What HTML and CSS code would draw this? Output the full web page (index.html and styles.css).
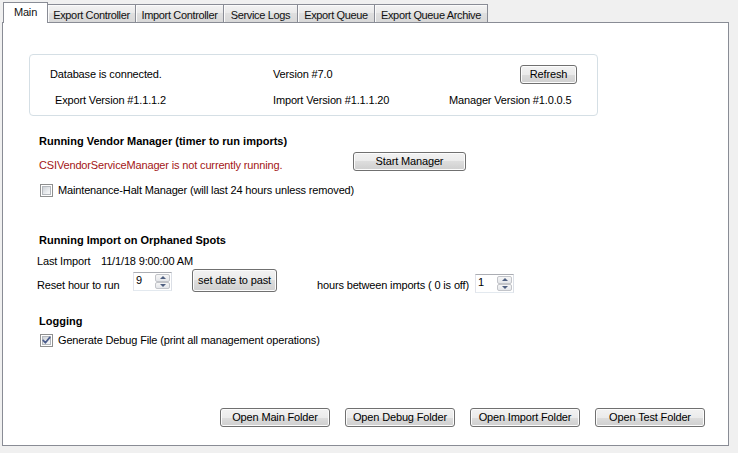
FILE: index.html
```html
<!DOCTYPE html>
<html>
<head>
<meta charset="utf-8">
<title>Vendor Manager</title>
<link rel="stylesheet" href="styles.css">
</head>
<body>
<div class="tabs">
  <div class="tab tab-active">Main</div>
  <div class="tab">Export Controller</div>
  <div class="tab">Import Controller</div>
  <div class="tab">Service Logs</div>
  <div class="tab">Export Queue</div>
  <div class="tab">Export Queue Archive</div>
</div>
<div class="panel">
  <div class="status-box">
    <span>Database is connected.</span>
    <span>Version #7.0</span>
    <span><button class="btn btn-refresh">Refresh</button></span>
    <span class="indent">Export Version #1.1.1.2</span>
    <span>Import Version #1.1.1.20</span>
    <span>Manager Version #1.0.0.5</span>
  </div>

  <section class="sec sec-vendor">
    <h2 class="heading">Running Vendor Manager (timer to run imports)</h2>
    <div class="vendor-row">
      <span class="warn">CSIVendorServiceManager is not currently running.</span>
      <button class="btn btn-start">Start Manager</button>
    </div>
    <div class="check-row">
      <span class="checkbox"></span>
      <span class="check-label">Maintenance-Halt Manager (will last 24 hours unless removed)</span>
    </div>
  </section>

  <section class="sec sec-orphan">
    <h2 class="heading">Running Import on Orphaned Spots</h2>
    <div class="info-row">
      <span class="info-key">Last Import</span>
      <span>11/1/18 9:00:00 AM</span>
    </div>
    <div class="reset-row">
      <span class="reset-label">Reset hour to run</span>
      <div class="spinner spinner-a">
        <span class="spin-val">9</span>
        <span class="spin-btns"><span class="spin-up"></span><span class="spin-down"></span></span>
      </div>
      <button class="btn btn-past">set date to past</button>
      <span class="hours-label">hours between imports ( 0 is off)</span>
      <div class="spinner spinner-b">
        <span class="spin-val">1</span>
        <span class="spin-btns"><span class="spin-up"></span><span class="spin-down"></span></span>
      </div>
    </div>
  </section>

  <section class="sec sec-logging">
    <h2 class="heading">Logging</h2>
    <div class="check-row check-row-log">
      <span class="checkbox checkbox-checked">
        <svg class="checkmark" width="13" height="13" viewBox="0 0 13 13"><path d="M3.2 6.4 L5.4 8.8 L9.8 3.4" fill="none" stroke="#4a5c8c" stroke-width="1.7" stroke-linecap="round" stroke-linejoin="round"/></svg>
      </span>
      <span class="check-label">Generate Debug File (print all management operations)</span>
    </div>
  </section>

  <div class="footer">
    <button class="btn btn-folder">Open Main Folder</button>
    <button class="btn btn-folder">Open Debug Folder</button>
    <button class="btn btn-folder">Open Import Folder</button>
    <button class="btn btn-folder">Open Test Folder</button>
  </div>
</div>
</body>
</html>
```

FILE: styles.css
```css
* { box-sizing: border-box; }
html, body { margin: 0; padding: 0; }
body {
  background: #f0f0f0;
  font: 11px/14px "Liberation Sans", Arial, sans-serif;
  letter-spacing: -0.15px;
  color: #000;
  width: 738px;
  height: 453px;
  overflow: hidden;
}

/* Tabs */
.tabs {
  display: flex;
  align-items: flex-end;
  height: 22px;
  padding: 2px 0 0 3px;
}
.tab {
  height: 18px;
  padding-top: 3px;
  text-align: center;
  white-space: nowrap;
  letter-spacing: -0.35px;
  color: #111;
  border: 1px solid #898c95;
  border-bottom: none;
  margin-left: -1px;
  background: linear-gradient(#f3f3f3, #e9e9e9 50%, #dfdfdf 50%, #d8d8d8);
  box-shadow: inset 1px 1px 0 #fbfbfb;
}
.tab:nth-child(1) { width: 45px; margin-left: 0; }
.tab:nth-child(2) { width: 89px; }
.tab:nth-child(3) { width: 89px; }
.tab:nth-child(4) { width: 75px; }
.tab:nth-child(5) { width: 78px; }
.tab:nth-child(6) { width: 114px; }
.tab-active {
  height: 21px;
  padding-top: 2px;
  margin-bottom: -1px;
  background: #fff;
  box-shadow: none;
  letter-spacing: -0.15px;
  position: relative;
  z-index: 1;
}

/* Panel */
.panel {
  margin-left: 2px;
  width: 727px;
  height: 424px;
  border: 1px solid #898c95;
  background: #fff;
  display: flex;
  flex-direction: column;
}

/* Status group */
.status-box {
  margin: 31px 0 0 26px;
  width: 569px;
  height: 62px;
  border: 1px solid #d5dfe5;
  border-radius: 4px;
  padding: 8px 0 4px 20px;
  display: grid;
  grid-template-columns: 223px 176px 1fr;
  grid-template-rows: 22px 22px;
  row-gap: 4px;
  align-items: center;
}
.indent { padding-left: 5px; }

/* Buttons */
.btn {
  font: inherit;
  letter-spacing: inherit;
  color: #000;
  height: 19px;
  padding: 0;
  line-height: 15px;
  border: 1px solid #707070;
  border-radius: 3px;
  background: linear-gradient(#f2f2f2, #ebebeb 50%, #dddddd 50%, #cfcfcf);
  box-shadow: inset 0 0 0 1px #fcfcfc;
  display: block;
}
.btn-refresh { width: 57px; margin-left: 71px; }
.btn-start { width: 113px; }
.btn-past { width: 85px; height: 23px; margin-left: 20px; }
.btn-folder { width: 110px; }

/* Sections */
.sec { padding-left: 36px; }
.heading {
  margin: 0;
  font-size: 11px;
  line-height: 14px;
  font-weight: bold;
  letter-spacing: 0;
}
.sec-vendor { margin-top: 18px; }
.vendor-row {
  display: grid;
  grid-template-columns: 314px 113px;
  margin-top: 4px;
  align-items: start;
}
.warn { color: #a31515; padding-top: 6px; }

.check-row {
  display: flex;
  align-items: center;
  height: 13px;
  margin-top: 12px;
}
.check-label { margin-left: 5px; line-height: 13px; }
.checkbox {
  width: 13px;
  height: 13px;
  margin-left: 1px;
  flex: none;
  border: 1px solid #8e8f8f;
  background: #fff;
  position: relative;
}
.checkbox::before {
  content: "";
  position: absolute;
  left: 1px; top: 1px; right: 1px; bottom: 1px;
  border: 1px solid #b4b8bd;
  background: linear-gradient(135deg, #cdd1d6, #eef0f2 70%, #f7f7f7);
}
.checkmark { position: absolute; left: -1px; top: -1px; z-index: 1; }

.sec-orphan { margin-top: 36px; }
.info-row {
  display: grid;
  grid-template-columns: 64px auto;
  margin: 7px 0 0 -2px;
}
.reset-row {
  display: flex;
  align-items: flex-start;
  margin: 1px 0 0 -2px;
}
.reset-label { width: 96px; margin-top: 9px; }
.hours-label { width: 158px; margin: 9px 0 0 40px; white-space: nowrap; }

/* Numeric spinner */
.spinner {
  display: flex;
  width: 39px;
  height: 19px;
  border: 1px solid;
  border-color: #abadb3 #dbdfe6 #e3e9ef #e2e3ea;
  background: #fff;
}
.spinner-a { margin-top: 3px; }
.spinner-b { margin-top: 5px; }
.spin-val { flex: 1; padding-left: 2px; line-height: 14px; }
.spin-btns {
  width: 16px;
  display: flex;
  flex-direction: column;
  padding: 1px 1px 1px 0;
}
.spin-up, .spin-down {
  flex: 1;
  border: 1px solid #c2c4c9;
  border-radius: 2px;
  background: linear-gradient(#f6f6f6, #e4e6ea);
  display: flex;
  align-items: center;
  justify-content: center;
}
.spin-up::after {
  content: "";
  border-left: 3px solid transparent;
  border-right: 3px solid transparent;
  border-bottom: 3px solid #4e5f80;
}
.spin-down::after {
  content: "";
  border-left: 3px solid transparent;
  border-right: 3px solid transparent;
  border-top: 3px solid #4e5f80;
}

.sec-logging { margin-top: 21px; }
.check-row-log { margin-top: 6px; }

/* Footer buttons */
.footer {
  margin-top: auto;
  display: flex;
  justify-content: flex-end;
  gap: 15px;
  padding: 0 23px 18px 0;
}
```
